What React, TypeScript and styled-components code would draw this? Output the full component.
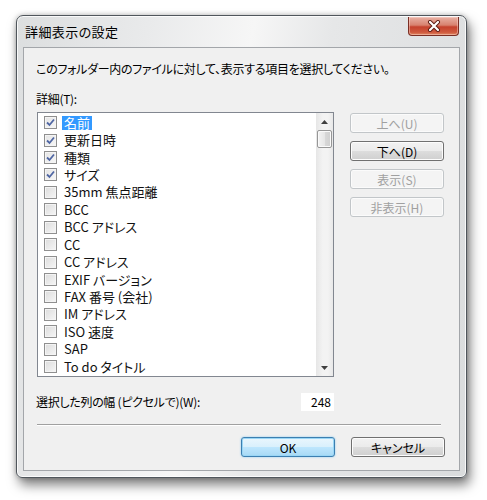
import * as React from 'react'
import styled, { createGlobalStyle } from 'styled-components'

const GlobalStyle = createGlobalStyle`
  body {
    margin: 0;
    background: #ffffff;
    font-family: 'Noto Sans CJK JP', 'Noto Sans', sans-serif;
  }
`

const Page = styled.div`
  width: 487px;
  height: 500px;
  box-sizing: border-box;
  padding: 15px 0 0 16px;
  background: #ffffff;
`

const Window = styled.div`
  width: 451px;
  height: 463px;
  box-sizing: border-box;
  display: flex;
  flex-direction: column;
  border: 1px solid #50565c;
  border-radius: 7px 7px 6px 6px;
  background: linear-gradient(
    100deg,
    #dcdedf 0%,
    #e9eaeb 25%,
    #f6f6f6 45%,
    #e6e7e8 60%,
    #dadcdd 100%
  );
  box-shadow: inset 0 0 0 1px rgba(255, 255, 255, 0.8),
    3px 7px 12px rgba(0, 0, 0, 0.5), 0 0 5px rgba(0, 0, 0, 0.25);
`

const TitleBar = styled.div`
  height: 31px;
  flex: none;
  display: flex;
  align-items: flex-start;
  justify-content: space-between;
`

const Title = styled.div`
  align-self: center;
  padding: 0 0 0 8px;
  font-size: 13px;
  color: #000;
  font-feature-settings: 'palt';
  letter-spacing: 0.4px;
`

const CloseButton = styled.div`
  width: 51px;
  height: 19px;
  margin: 1px 7px 0 0;
  box-sizing: border-box;
  display: flex;
  align-items: center;
  justify-content: center;
  border: 1px solid #7a2e24;
  border-top: none;
  border-radius: 0 0 4px 4px;
  background: linear-gradient(
    #e8b1a5 0%,
    #d8826f 45%,
    #c5412d 55%,
    #cf5a3e 85%,
    #e08a64 100%
  );
  box-shadow: inset 0 0 0 1px rgba(255, 220, 210, 0.45);
`

const Client = styled.div`
  flex: 1;
  margin: 0 6px 6px 6px;
  box-sizing: border-box;
  border: 1px solid #a3a6aa;
  background: #f0f0f0;
  padding: 13px 14px 0 13px;
  display: flex;
  flex-direction: column;
  color: #000;
  font-size: 12px;
  font-feature-settings: 'palt';
`

const Text = styled.div`
  line-height: 16px;
  margin-left: -1px;
  letter-spacing: -0.3px;
`

const SectionLabel = styled(Text)`
  margin-top: 14px;
`

const Body = styled.div`
  display: flex;
  gap: 16px;
  margin-top: 5px;
`

const ListBox = styled.div`
  width: 297px;
  height: 265px;
  box-sizing: border-box;
  border: 1px solid #828790;
  background: #fff;
  display: flex;
`

const Items = styled.div`
  flex: 1;
  padding: 1px 0 0 6px;
  overflow: hidden;
`

const Row = styled.div`
  height: 17.43px;
  display: flex;
  align-items: center;
  gap: 5px;
  font-size: 13px;
  color: #111;
`

const Check = styled.span<{ $checked: boolean }>`
  width: 13px;
  height: 13px;
  box-sizing: border-box;
  flex: none;
  display: flex;
  align-items: center;
  justify-content: center;
  border: 1px solid #8f8f8f;
  background: ${(p) =>
    p.$checked
      ? 'linear-gradient(135deg, #e4e4e4, #f7f7f7)'
      : 'linear-gradient(135deg, #dcdcdc, #f6f6f6)'};
  box-shadow: inset 0 0 0 1px #f4f4f4;
`

const Label = styled.span<{ $selected?: boolean }>`
  padding: 0 2px;
  line-height: 14px;
  background: ${(p) => (p.$selected ? '#3399ff' : 'transparent')};
  color: ${(p) => (p.$selected ? '#fff' : 'inherit')};
`

const ScrollBar = styled.div`
  width: 17px;
  flex: none;
  display: flex;
  flex-direction: column;
  background: linear-gradient(90deg, #e6e6e6, #f3f3f3 40%, #f3f3f3 70%, #e8e8e8);
`

const Arrow = styled.div`
  height: 17px;
  display: flex;
  align-items: center;
  justify-content: center;
`

const Track = styled.div`
  flex: 1;
`

const Thumb = styled.div`
  height: 18px;
  margin: 0 1px;
  box-sizing: border-box;
  border: 1px solid #979797;
  border-radius: 2px;
  background: linear-gradient(90deg, #f3f3f3, #e6e6e6 50%, #d8d8d8 51%, #cfcfcf);
  box-shadow: inset 0 0 0 1px #fafafa;
`

const ButtonColumn = styled.div`
  width: 94px;
  display: flex;
  flex-direction: column;
  gap: 8px;
  padding-top: 1px;
`

const Button = styled.div<{ $disabled?: boolean; $primary?: boolean }>`
  height: 20px;
  box-sizing: border-box;
  display: flex;
  align-items: center;
  justify-content: center;
  border-radius: 3px;
  font-size: 12px;
  border: 1px solid
    ${(p) => (p.$disabled ? '#c2c6c9' : p.$primary ? '#3c7fb1' : '#707070')};
  color: ${(p) => (p.$disabled ? '#a0a0a0' : '#000')};
  background: ${(p) =>
    p.$disabled
      ? '#f4f4f4'
      : p.$primary
        ? 'linear-gradient(#eaf6fd 0%, #d9f0fc 50%, #bee6fd 51%, #a7d9f5 100%)'
        : 'linear-gradient(#f2f2f2 0%, #ebebeb 50%, #dddddd 51%, #cfcfcf 100%)'};
  box-shadow: ${(p) =>
    p.$disabled
      ? 'inset 0 0 0 1px #fbfbfb'
      : p.$primary
        ? 'inset 0 0 0 1px #9ad6f5, 0 0 2px #7fc7ef'
        : 'inset 0 0 0 1px #fcfcfc'};
`

const WidthRow = styled.div`
  display: flex;
  align-items: center;
  justify-content: space-between;
  width: 298px;
  margin-top: 15px;
`

const NumberBox = styled.div`
  width: 35px;
  height: 20px;
  box-sizing: border-box;
  background: #fff;
  border: 1px solid #f0f0f0;
  text-align: right;
  padding-right: 3px;
  line-height: 18px;
  font-size: 12px;
`

const Separator = styled.div`
  height: 0;
  margin-top: 12px;
  width: 404px;
  border-top: 1px solid #a0a0a0;
  border-bottom: 1px solid #ffffff;
`

const Footer = styled.div`
  display: flex;
  justify-content: flex-end;
  gap: 16px;
  margin-top: 11px;
  & > div {
    width: 94px;
  }
`

const items = [
  { label: '名前', checked: true, selected: true },
  { label: '更新日時', checked: true },
  { label: '種類', checked: true },
  { label: 'サイズ', checked: true },
  { label: '35mm 焦点距離' },
  { label: 'BCC' },
  { label: 'BCC アドレス' },
  { label: 'CC' },
  { label: 'CC アドレス' },
  { label: 'EXIF バージョン' },
  { label: 'FAX 番号 (会社)' },
  { label: 'IM アドレス' },
  { label: 'ISO 速度' },
  { label: 'SAP' },
  { label: 'To do タイトル' },
]

const CheckMark = () => (
  <svg width="9" height="9" viewBox="0 0 9 9">
    <path d="M1 4.5 L3.5 7 L8 1.5" fill="none" stroke="#4f66a3" strokeWidth="1.8" />
  </svg>
)

const App = () => {
  return (
    <Page>
      <GlobalStyle />
      <Window>
        <TitleBar>
          <Title>詳細表示の設定</Title>
          <CloseButton>
            <svg width="14" height="12" viewBox="0 0 14 12">
              <path
                d="M3 2 L11 10 M11 2 L3 10"
                stroke="#5a1a12"
                strokeWidth="4"
                strokeLinecap="round"
              />
              <path d="M3 2 L11 10 M11 2 L3 10" stroke="#ffffff" strokeWidth="2.2" strokeLinecap="round" />
            </svg>
          </CloseButton>
        </TitleBar>
        <Client>
          <Text>このフォルダー内のファイルに対して、表示する項目を選択してください。</Text>
          <SectionLabel>詳細(T):</SectionLabel>
          <Body>
            <ListBox>
              <Items>
                {items.map((it) => (
                  <Row key={it.label}>
                    <Check $checked={!!it.checked}>{it.checked && <CheckMark />}</Check>
                    <Label $selected={it.selected}>{it.label}</Label>
                  </Row>
                ))}
              </Items>
              <ScrollBar>
                <Arrow>
                  <svg width="7" height="4" viewBox="0 0 7 4">
                    <path d="M0 4 L3.5 0 L7 4 Z" fill="#404040" />
                  </svg>
                </Arrow>
                <Track>
                  <Thumb />
                </Track>
                <Arrow>
                  <svg width="7" height="4" viewBox="0 0 7 4">
                    <path d="M0 0 L3.5 4 L7 0 Z" fill="#404040" />
                  </svg>
                </Arrow>
              </ScrollBar>
            </ListBox>
            <ButtonColumn>
              <Button $disabled>上へ(U)</Button>
              <Button>下へ(D)</Button>
              <Button $disabled>表示(S)</Button>
              <Button $disabled>非表示(H)</Button>
            </ButtonColumn>
          </Body>
          <WidthRow>
            <Text>選択した列の幅 (ピクセルで)(W):</Text>
            <NumberBox>248</NumberBox>
          </WidthRow>
          <Separator />
          <Footer>
            <Button $primary>OK</Button>
            <Button>キャンセル</Button>
          </Footer>
        </Client>
      </Window>
    </Page>
  )
}

export default App
